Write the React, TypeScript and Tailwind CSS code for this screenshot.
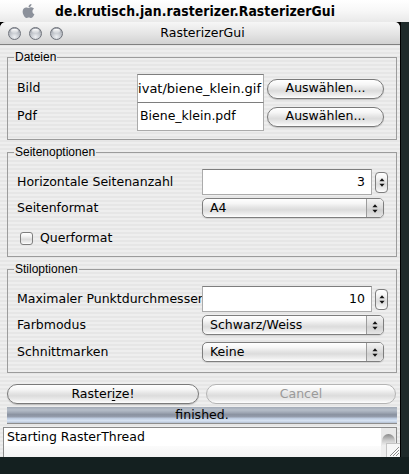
import React from "react";
import { FaApple } from "react-icons/fa";

const UI = "font-['DejaVu_Sans',sans-serif]";
const LEG = "font-['Liberation_Sans',Arial,sans-serif]";
const STRIPE =
  "bg-[repeating-linear-gradient(to_bottom,#eeeeee_0px,#eeeeee_2px,#e6e6e6_2px,#e6e6e6_4px)]";
const GLOSS =
  "bg-[linear-gradient(to_bottom,#ffffff_0%,#f6f6f6_25%,#e2e2e2_50%,#dcdcdc_60%,#eeeeee_85%,#ffffff_100%)]";

function UpDown({ w = 7, h = 11 }: { w?: number; h?: number }) {
  return (
    <svg width={w} height={h} viewBox="0 0 7 11">
      <path d="M3.5 0.5 L6.5 4 L0.5 4 Z" fill="#111" />
      <path d="M3.5 10.5 L6.5 7 L0.5 7 Z" fill="#111" />
    </svg>
  );
}

function Legend({ children }: { children: React.ReactNode }) {
  return (
    <legend className={`ml-[6px] px-[1px] text-[12px] leading-[13px] text-black ${LEG}`}>
      {children}
    </legend>
  );
}

function PushButton({
  children,
  disabled,
  className = "",
}: {
  children: React.ReactNode;
  disabled?: boolean;
  className?: string;
}) {
  return (
    <div
      className={`h-[20px] rounded-full border flex items-center justify-center text-[12.5px] leading-none ${GLOSS} ${
        disabled
          ? "border-[#b4b4b4] text-[#9a9a9a]"
          : "border-[#7a7a7a] text-black shadow-[0_1px_1px_rgba(0,0,0,0.18)]"
      } ${className}`}
    >
      {children}
    </div>
  );
}

function TextField({
  children,
  className = "",
  right,
}: {
  children: React.ReactNode;
  className?: string;
  right?: boolean;
}) {
  return (
    <div
      className={`bg-white border border-[#ababab] border-t-[#7e7e7e] flex items-center overflow-hidden whitespace-nowrap text-[12.5px] text-black ${
        right ? "justify-end pr-[6px]" : "pl-[2px]"
      } ${className}`}
    >
      {children}
    </div>
  );
}

function Spinner() {
  return (
    <div
      className={`ml-[3px] w-[13px] h-[21px] rounded-[4px] border border-[#7e7e7e] flex items-center justify-center ${GLOSS}`}
    >
      <UpDown w={6} h={11} />
    </div>
  );
}

function Combo({ value }: { value: string }) {
  return (
    <div
      className={`w-[182px] h-[20px] rounded-[5px] border border-[#7e7e7e] flex overflow-hidden shadow-[0_1px_1px_rgba(0,0,0,0.12)] ${GLOSS}`}
    >
      <div className="flex-1 flex items-center pl-[7px] text-[12.5px] text-black">{value}</div>
      <div className="w-[17px] border-l border-[#9c9c9c] flex items-center justify-center bg-[linear-gradient(to_bottom,#f4f4f4_0%,#dadada_50%,#cfcfcf_60%,#e6e6e6_100%)]">
        <UpDown w={6} h={11} />
      </div>
    </div>
  );
}

function Light() {
  return (
    <div className="w-[13px] h-[13px] rounded-full border border-[#6e727a] bg-[radial-gradient(circle_at_50%_80%,#eef0f3_0%,#c2c6cc_45%,#9a9ea6_100%)] flex justify-center">
      <div className="mt-[1px] w-[7px] h-[4px] rounded-full bg-[linear-gradient(to_bottom,#ffffff,rgba(255,255,255,0.2))]" />
    </div>
  );
}

export default function App() {
  return (
    <div className={`w-[409px] h-[474px] overflow-hidden bg-black flex flex-col ${UI}`}>
      {/* menu bar */}
      <div className="h-[22px] w-full shrink-0 flex items-center bg-[linear-gradient(to_bottom,#ffffff_0%,#f7f7f7_50%,#e9e9e9_100%)]">
        <FaApple className="ml-[21px] w-[15px] h-[16px] text-[#8c919b]" />
        <span className="ml-[19px] text-[13.8px] font-bold text-black font-['DejaVu_Sans_Condensed','DejaVu_Sans',sans-serif] tracking-[0.1px]">
          de.krutisch.jan.rasterizer.RasterizerGui
        </span>
      </div>

      <div className="h-[435px] shrink-0 flex overflow-hidden">
        {/* window */}
        <div
          className={`relative w-[401px] h-[435px] shrink-0 flex flex-col rounded-t-[6px] overflow-hidden border-r border-black ${STRIPE}`}
        >
          {/* title bar */}
          <div className="h-[23px] shrink-0 grid grid-cols-[1fr_auto_1fr] items-center border-b border-[#808080] bg-[linear-gradient(to_bottom,#f6f6f6_0%,#e6e6e6_50%,#d2d2d2_100%)]">
            <div className="flex gap-[8px] pl-[8px]">
              <Light />
              <Light />
              <Light />
            </div>
            <div className="text-[12.5px] text-black pl-[5px]">RasterizerGui</div>
            <div />
          </div>

          {/* content */}
          <div className="h-[412px] shrink-0 flex flex-col pl-[7px] pr-[3px] pt-[6px] overflow-hidden">
            {/* Dateien */}
            <fieldset className="border border-[#9c9c9c] p-0 m-0 min-w-0 shrink-0">
              <Legend>Dateien</Legend>
              <div className="pl-[9px] pr-[11px] pt-[10px] pb-[8px] flex flex-col text-[12.5px] text-black">
                <div className="h-[29px] flex items-center">
                  <div className="w-[120px]">Bild</div>
                  <TextField className="w-[127px] h-[29px]" right>
                    <span className="-mr-[4px] text-[13px]">privat/biene_klein.gif</span>
                  </TextField>
                  <PushButton className="ml-[3px] w-[117px]">Auswählen...</PushButton>
                </div>
                <div className="h-[29px] -mt-[1px] flex items-center">
                  <div className="w-[120px]">Pdf</div>
                  <TextField className="w-[127px] h-[29px]">Biene_klein.pdf</TextField>
                  <PushButton className="ml-[3px] w-[117px]">Auswählen...</PushButton>
                </div>
              </div>
            </fieldset>

            {/* Seitenoptionen */}
            <fieldset className="mt-[6px] border border-[#9c9c9c] p-0 m-0 min-w-0 shrink-0">
              <Legend>Seitenoptionen</Legend>
              <div className="pl-[9px] pr-[8px] pt-[10px] pb-[11px] flex flex-col text-[12.5px] text-black">
                <div className="h-[26px] flex items-center">
                  <div className="w-[185px]">Horizontale Seitenanzahl</div>
                  <TextField className="w-[170px] h-[26px]" right>
                    3
                  </TextField>
                  <Spinner />
                </div>
                <div className="mt-[3px] h-[20px] flex items-center">
                  <div className="w-[185px]">Seitenformat</div>
                  <Combo value="A4" />
                </div>
                <div className="mt-[14px] h-[13px] flex items-center">
                  <div
                    className={`ml-[3px] w-[13px] h-[13px] rounded-[3px] border border-[#7e7e7e] ${GLOSS}`}
                  />
                  <div className="ml-[7px]">Querformat</div>
                </div>
              </div>
            </fieldset>

            {/* Stiloptionen */}
            <fieldset className="mt-[6px] border border-[#9c9c9c] p-0 m-0 min-w-0 shrink-0">
              <Legend>Stiloptionen</Legend>
              <div className="pl-[9px] pr-[8px] pt-[10px] pb-[10px] flex flex-col text-[12.5px] text-black">
                <div className="h-[26px] flex items-center">
                  <div className="w-[185px] whitespace-nowrap">Maximaler Punktdurchmesser</div>
                  <TextField className="w-[170px] h-[26px]" right>
                    10
                  </TextField>
                  <Spinner />
                </div>
                <div className="mt-[3px] h-[20px] flex items-center">
                  <div className="w-[185px]">Farbmodus</div>
                  <Combo value="Schwarz/Weiss" />
                </div>
                <div className="mt-[7px] h-[20px] flex items-center">
                  <div className="w-[185px]">Schnittmarken</div>
                  <Combo value="Keine" />
                </div>
              </div>
            </fieldset>

            {/* buttons */}
            <div className="mt-[11px] flex gap-[7px] pr-[1px] shrink-0">
              <PushButton className="w-[192px]">
                <span>
                  Raster<span className="underline underline-offset-2">i</span>ze!
                </span>
              </PushButton>
              <PushButton className="w-[190px]" disabled>
                Cancel
              </PushButton>
            </div>

            {/* progress */}
            <div className="mt-[3px] h-[17px] shrink-0 border-b border-[#8e8e8e] flex items-center justify-center text-[12.5px] text-black bg-[linear-gradient(to_bottom,#a2aab6_0%,#b6bec9_18%,#a4acb9_32%,#8a92a0_48%,#949cab_60%,#c0cee2_72%,#d8e4f4_86%,#b4c0d2_100%)]">
              finished.
            </div>

            {/* log */}
            <div className="mt-[3px] -ml-[4px] w-[394px] h-[40px] shrink-0 relative border-l border-t border-r border-[#8a8a8a] flex">
              <div className="flex-1 flex flex-col">
                <div className="h-[18px] bg-white flex items-center pl-[3px] text-[12.5px] text-black whitespace-nowrap">
                  Starting RasterThread
                </div>
                <div className="flex-1 bg-[linear-gradient(to_bottom,#fbfbfb,#ececec)]" />
              </div>
              <div className="w-[15px] flex flex-col">
                <div className="h-[18px] bg-[#ececec]">
                  <svg width="15" height="18" viewBox="0 0 15 18">
                    <defs>
                      <linearGradient id="dome" x1="0" y1="0" x2="0" y2="1">
                        <stop offset="0" stopColor="#8a8a8a" />
                        <stop offset="0.5" stopColor="#c8c8c8" />
                        <stop offset="1" stopColor="#f2f2f2" />
                      </linearGradient>
                    </defs>
                    <rect x="0" y="0" width="15" height="18" fill="#e9e9e9" />
                    <path d="M1 18 L1 13 A6.5 7 0 0 1 14 13 L14 18 Z" fill="url(#dome)" />
                  </svg>
                </div>
                <div className="flex-1 bg-[#eeeeee]" />
              </div>
            </div>
          </div>

          {/* resize grip */}
          <div className="absolute right-0 bottom-0 w-[14px] h-[14px] border-l border-t border-[#c4c4c4] bg-[#f6f6f6]">
            <svg width="13" height="13" viewBox="0 0 13 13">
              <path d="M12 3 L3 12 M12 6 L6 12 M12 9 L9 12" stroke="#8a8a8a" strokeWidth="1" />
              <path d="M12 4 L4 12 M12 7 L7 12 M12 10 L10 12" stroke="#ffffff" strokeWidth="1" />
            </svg>
          </div>
        </div>
        <div className="flex-1 bg-[#1e2a2a]" />
      </div>
      <div className="flex-1 bg-[#142020]" />
    </div>
  );
}
